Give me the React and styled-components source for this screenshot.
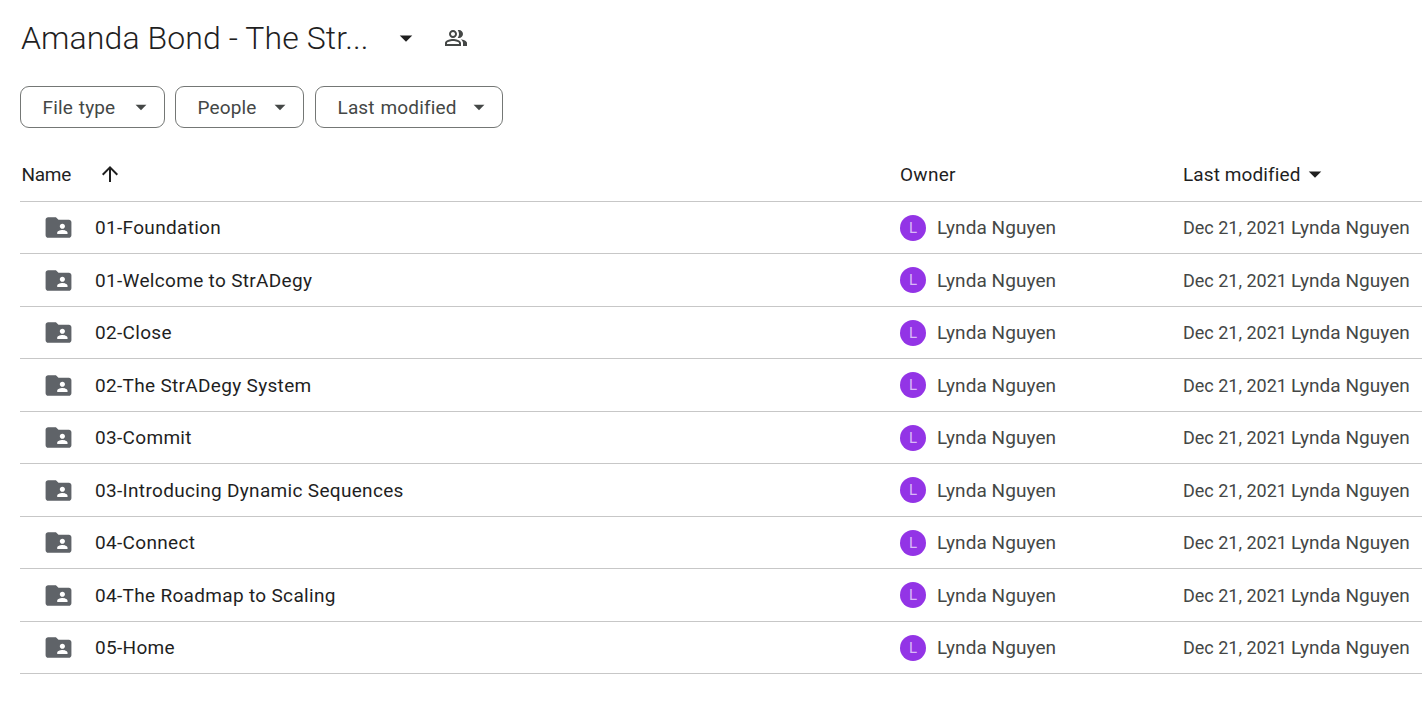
import React from 'react';
import styled, { createGlobalStyle } from 'styled-components';

const GlobalStyle = createGlobalStyle`
  html, body {
    margin: 0;
    background: #fff;
    font-family: "Roboto", "Liberation Sans", sans-serif;
    overflow: hidden;
  }
`;

const Page = styled.div`
  width: 1422px;
  height: 707px;
  padding: 0 0 0 20px;
  box-sizing: border-box;
`;

const TitleRow = styled.div`
  display: flex;
  align-items: center;
  height: 76px;
`;

const Title = styled.h1`
  margin: 0;
  width: 371px;
  padding-left: 1px;
  box-sizing: border-box;
  font-size: 32px;
  font-weight: 300;
  letter-spacing: 0.1px;
  color: #1f1f1f;
  white-space: nowrap;
`;

const ShareIcon = styled.span`
  display: flex;
  margin-left: 23px;
`;

const Filters = styled.div`
  display: flex;
  gap: 10px;
  margin-top: 10px;
`;

const FilterChip = styled.button`
  display: flex;
  align-items: center;
  justify-content: space-between;
  width: ${(p) => p.$width}px;
  height: 42px;
  margin-right: ${(p) => p.$after || 0}px;
  padding: 0 10px 0 21.5px;
  box-sizing: border-box;
  background: #fff;
  border: 1px solid #747775;
  border-radius: 9px;
  font: 400 19px "Roboto", sans-serif;
  letter-spacing: 0.15px;
  word-spacing: 1px;
  color: #444746;
`;

const HeaderRow = styled.div`
  display: grid;
  grid-template-columns: 880px 283px 1fr;
  align-items: center;
  height: 72.5px;
  padding-top: 19px;
  box-sizing: border-box;
  margin-top: 1px;
  border-bottom: 1px solid #c7c7c7;
  font-size: 19px;
  color: #1f1f1f;
`;

const HeaderCell = styled.div`
  display: flex;
  align-items: center;
  gap: ${(p) => p.$gap || 0}px;
  padding-left: ${(p) => p.$pad || 0}px;
  letter-spacing: ${(p) => p.$track || 0}px;
`;

const Row = styled.div`
  display: grid;
  grid-template-columns: 880px 283px 1fr;
  align-items: center;
  height: 50.5px;
  padding-top: 1px;
  border-bottom: 1px solid #c7c7c7;
  font-size: 19px;
  white-space: nowrap;
`;

const NameCell = styled.div`
  display: flex;
  align-items: center;
  gap: 21.5px;
  padding-left: 22.5px;
  letter-spacing: 0.32px;
  color: #1f1f1f;
`;

const OwnerCell = styled.div`
  display: flex;
  align-items: center;
  gap: 11px;
  letter-spacing: 0.06px;
  color: #444746;
`;

const Avatar = styled.span`
  display: flex;
  align-items: center;
  justify-content: center;
  width: 26px;
  height: 26px;
  border-radius: 50%;
  background: #9334e6;
  color: #d9b8f7;
  font-size: 15px;
`;

const Modified = styled.div`
  display: flex;
  align-items: baseline;
  gap: 4px;
  color: #444746;
`;

const ModifiedDate = styled.span`
  font-size: 18px;
`;

const ModifiedBy = styled.span`
  letter-spacing: 0.04px;
`;

function Caret({ size = 26, color = '#444746' }) {
  return (
    <svg width={size} height={size} viewBox="0 0 24 24" fill={color}>
      <path d="M7 10l5 5 5-5z" />
    </svg>
  );
}

function SharedFolder() {
  return (
    <svg width="31" height="31" viewBox="0 0 24 24" fill="#5f6368">
      <path d="M20 6h-8l-2-2H4c-1.1 0-2 .9-2 2v12c0 1.1.9 2 2 2h16c1.1 0 2-.9 2-2V8c0-1.1-.9-2-2-2zm-5 3c1.1 0 2 .9 2 2s-.9 2-2 2-2-.9-2-2 .9-2 2-2zm4 8h-8v-1c0-1.33 2.67-2 4-2s4 .67 4 2v1z" />
    </svg>
  );
}

function PeopleOutline() {
  return (
    <svg width="24" height="24" viewBox="0 0 24 24" fill="#444746">
      <path d="M16.67 13.13C18.04 14.06 19 15.32 19 17v3h4v-3c0-2.18-3.57-3.47-6.33-3.87zM15 12c2.21 0 4-1.79 4-4s-1.79-4-4-4c-.47 0-.91.1-1.33.24C14.5 5.27 15 6.58 15 8s-.5 2.73-1.33 3.76c.42.14.86.24 1.33.24zM9 12c2.21 0 4-1.79 4-4s-1.79-4-4-4-4 1.79-4 4 1.79 4 4 4zm0-6c1.1 0 2 .9 2 2s-.9 2-2 2-2-.9-2-2 .9-2 2-2zM9 13c-2.67 0-8 1.34-8 4v3h16v-3c0-2.66-5.33-4-8-4zm6 5H3v-1c0-.8 3.13-2 6-2s6 1.2 6 2v1z" />
    </svg>
  );
}

function ArrowUp() {
  return (
    <svg width="24" height="24" viewBox="0 0 24 24" fill="#1f1f1f">
      <path d="M4 12l1.41 1.41L11 7.83V20h2V7.83l5.58 5.59L20 12l-8-8-8 8z" />
    </svg>
  );
}

const folders = [
  '01-Foundation',
  '01-Welcome to StrADegy',
  '02-Close',
  '02-The StrADegy System',
  '03-Commit',
  '03-Introducing Dynamic Sequences',
  '04-Connect',
  '04-The Roadmap to Scaling',
  '05-Home',
];

export default function App() {
  return (
    <Page>
      <GlobalStyle />
      <TitleRow>
        <Title>Amanda Bond - The Str...</Title>
        <Caret size={30} color="#1f1f1f" />
        <ShareIcon><PeopleOutline /></ShareIcon>
      </TitleRow>
      <Filters>
        <FilterChip $width={145}>File type <Caret /></FilterChip>
        <FilterChip $width={129} $after={1}>People <Caret /></FilterChip>
        <FilterChip $width={188}>Last modified <Caret /></FilterChip>
      </Filters>
      <HeaderRow>
        <HeaderCell $gap={27} $pad={1.5} $track={-0.3}>Name <ArrowUp /></HeaderCell>
        <HeaderCell $track={0.3}>Owner</HeaderCell>
        <HeaderCell $track={0.1}>Last modified <Caret size={30} color="#1f1f1f" /></HeaderCell>
      </HeaderRow>
      {folders.map((name) => (
        <Row key={name}>
          <NameCell><SharedFolder />{name}</NameCell>
          <OwnerCell><Avatar>L</Avatar>Lynda Nguyen</OwnerCell>
          <Modified><ModifiedDate>Dec 21, 2021</ModifiedDate><ModifiedBy>Lynda Nguyen</ModifiedBy></Modified>
        </Row>
      ))}
    </Page>
  );
}
